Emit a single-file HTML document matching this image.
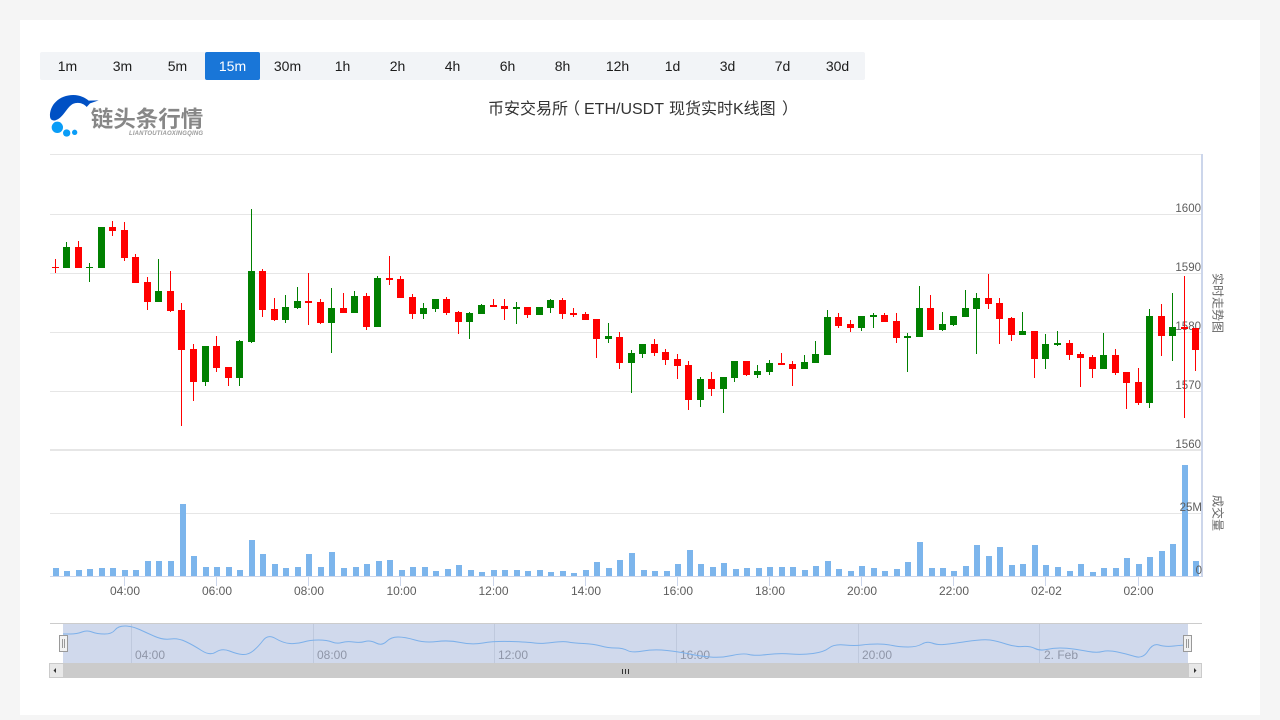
<!DOCTYPE html>
<html lang="zh">
<head>
<meta charset="utf-8">
<title>币安交易所 K线图</title>
<style>
html,body{margin:0;padding:0;width:1280px;height:720px;overflow:hidden;background:#f5f5f5}
body{position:relative;font-family:"Liberation Sans","Noto Sans CJK SC",sans-serif}
#card{position:absolute;left:20px;top:20px;width:1240px;height:695px;background:#fff}
#tabs{position:absolute;left:40px;top:52px;width:825px;height:28px;background:#f2f4f7;display:flex;border-radius:2px}
#tabs span{display:block;width:55px;height:28px;line-height:28px;text-align:center;font-size:14px;color:#1c1c1c}
#tabs span.on{background:#1976d8;color:#fff;border-radius:2px}
svg{position:absolute;left:0;top:0}
text{font-family:"Liberation Sans","Noto Sans CJK SC",sans-serif}
</style>
</head>
<body>
<div id="card"></div>
<div id="tabs"><span>1m</span><span>3m</span><span>5m</span><span class="on">15m</span><span>30m</span><span>1h</span><span>2h</span><span>4h</span><span>6h</span><span>8h</span><span>12h</span><span>1d</span><span>3d</span><span>7d</span><span>30d</span></div>

<svg width="320" height="110" viewBox="0 0 960 330" style="left:30px;top:40px">
<path fill="#0050c4" d="M60 230C58 195 88 165 130 165C150 165 165 173 176 182L206 181L180 190L170 201C160 190 145 185 128 192C110 202 100 234 76 241C66 243 61 238 60 230Z"/>
<circle cx="82" cy="262" r="17" fill="#0a9df7"/>
<circle cx="110" cy="279" r="11" fill="#0a9df7"/>
<circle cx="134" cy="277" r="8" fill="#0a9df7"/>
</svg>

<svg width="1280" height="720" viewBox="0 0 1280 720">
<text x="147" y="127" text-anchor="middle" font-size="22.5" font-weight="bold" fill="#878787">链头条行情</text>
<text x="203" y="135" text-anchor="end" font-size="6" font-weight="bold" font-style="italic" fill="#9a9a9a" textLength="74" lengthAdjust="spacing">LIANTOUTIAOXINGQING</text>
<g font-size="16" fill="#333">
<text x="488" y="114">币安交易所</text>
<text x="564" y="114">（</text>
<text x="584" y="114">ETH/USDT</text>
<text x="669" y="114">现货实时K线图</text>
<text x="782" y="114">）</text>
</g>

<g shape-rendering="crispEdges">
<g fill="#e6e6e6">
<rect x="50" y="154" width="1152" height="1"/>
<rect x="50" y="214" width="1152" height="1"/>
<rect x="50" y="273" width="1152" height="1"/>
<rect x="50" y="332" width="1152" height="1"/>
<rect x="50" y="391" width="1152" height="1"/>
<rect x="50" y="449" width="1152" height="2"/>
<rect x="50" y="513" width="1152" height="1"/>
</g>
<g fill="#ccd6eb">
<rect x="1201" y="154" width="2" height="423"/>
<rect x="50" y="576" width="1152" height="1"/>
<rect x="124" y="577" width="1" height="9"/><rect x="216" y="577" width="1" height="9"/><rect x="308" y="577" width="1" height="9"/><rect x="400" y="577" width="1" height="9"/><rect x="493" y="577" width="1" height="9"/><rect x="585" y="577" width="1" height="9"/><rect x="677" y="577" width="1" height="9"/><rect x="769" y="577" width="1" height="9"/><rect x="861" y="577" width="1" height="9"/><rect x="953" y="577" width="1" height="9"/><rect x="1045" y="577" width="1" height="9"/><rect x="1138" y="577" width="1" height="9"/>
</g>
</g>

<g font-size="11.5" fill="#5e5e5e" text-anchor="end">
<text x="1201" y="212">1600</text>
<text x="1201" y="271">1590</text>
<text x="1201" y="330">1580</text>
<text x="1201" y="389">1570</text>
<text x="1201" y="448">1560</text>
</g>

<g shape-rendering="crispEdges">
<path stroke="#f00" fill="none" d="M55.5 259V273M78.5 241V268M112.5 221V236M124.5 222V261M135.5 254V283M147.5 277V310M170.5 271V312M181.5 303V426M193.5 344V401M216.5 336V372M228.5 367V386M262.5 269V317M274.5 298V321M308.5 273V325M320.5 299V324M343.5 293V313M366.5 293V330M389.5 256V285M400.5 276V298M412.5 294V319M446.5 297V315M458.5 311V334M493.5 299V307M504.5 299V320M527.5 307V318M562.5 298V319M573.5 308V317M585.5 312V320M596.5 319V358M619.5 332V369M654.5 339V356M665.5 349V365M677.5 354V379M688.5 361V410M711.5 372V396M746.5 361V376M781.5 353V365M792.5 361V386M838.5 313V328M850.5 320V332M884.5 313V322M896.5 313V343M930.5 295V330M988.5 274V309M999.5 298V344M1011.5 317V341M1034.5 331V378M1069.5 340V360M1080.5 352V387M1092.5 355V378M1115.5 349V375M1126.5 372V409M1138.5 368V405M1161.5 304V356M1184.5 276V418M1195.5 328V371"/>
<path fill="#f00" d="M52 267h7V268h-7zM75 247h7V268h-7zM109 227h7V231h-7zM121 230h7V258h-7zM132 257h7V283h-7zM144 282h7V302h-7zM167 291h7V311h-7zM178 310h7V350h-7zM190 349h7V382h-7zM213 346h7V368h-7zM225 367h7V378h-7zM259 271h7V310h-7zM271 309h7V320h-7zM305 301h7V303h-7zM317 302h7V323h-7zM340 308h7V313h-7zM363 296h7V327h-7zM386 278h7V280h-7zM397 279h7V298h-7zM409 297h7V314h-7zM443 299h7V313h-7zM455 312h7V322h-7zM490 305h7V307h-7zM501 306h7V309h-7zM524 307h7V315h-7zM559 300h7V314h-7zM570 313h7V315h-7zM582 314h7V320h-7zM593 319h7V339h-7zM616 337h7V363h-7zM651 344h7V353h-7zM662 352h7V360h-7zM674 359h7V366h-7zM685 365h7V400h-7zM708 379h7V389h-7zM743 361h7V375h-7zM778 363h7V365h-7zM789 364h7V369h-7zM835 317h7V326h-7zM847 324h7V328h-7zM881 315h7V322h-7zM893 321h7V338h-7zM927 308h7V330h-7zM985 298h7V304h-7zM996 303h7V319h-7zM1008 318h7V335h-7zM1031 331h7V359h-7zM1066 343h7V355h-7zM1077 354h7V358h-7zM1089 357h7V369h-7zM1112 355h7V373h-7zM1123 372h7V383h-7zM1135 382h7V403h-7zM1158 316h7V336h-7zM1181 327h7V329h-7zM1192 328h7V350h-7z"/>
<path stroke="#008000" fill="none" d="M66.5 242V268M89.5 263V282M101.5 227V268M158.5 259V302M205.5 346V386M239.5 340V386M251.5 209V343M285.5 295V323M297.5 287V309M331.5 288V353M354.5 291V313M377.5 276V327M423.5 303V319M435.5 299V312M469.5 312V339M481.5 304V314M516.5 302V324M539.5 307V315M550.5 299V313M608.5 323V343M631.5 350V393M642.5 344V358M700.5 377V407M723.5 377V413M734.5 361V382M757.5 365V378M769.5 360V375M804.5 355V369M815.5 341V363M827.5 310V355M861.5 316V331M873.5 313V328M907.5 333V372M919.5 286V337M942.5 312V331M953.5 316V326M965.5 290V317M976.5 293V354M1022.5 312V335M1045.5 334V369M1057.5 331V346M1103.5 333V369M1149.5 309V408M1172.5 293V361"/>
<path fill="#008000" d="M63 247h7V268h-7zM86 267h7V268h-7zM98 227h7V268h-7zM155 291h7V302h-7zM202 346h7V382h-7zM236 341h7V378h-7zM248 271h7V342h-7zM282 307h7V320h-7zM294 301h7V308h-7zM328 308h7V323h-7zM351 296h7V313h-7zM374 278h7V327h-7zM420 308h7V314h-7zM432 299h7V309h-7zM466 313h7V322h-7zM478 305h7V314h-7zM513 307h7V309h-7zM536 307h7V315h-7zM547 300h7V308h-7zM605 336h7V339h-7zM628 353h7V363h-7zM639 344h7V354h-7zM697 379h7V400h-7zM720 377h7V389h-7zM731 361h7V378h-7zM754 371h7V375h-7zM766 363h7V372h-7zM801 362h7V369h-7zM812 354h7V363h-7zM824 317h7V355h-7zM858 316h7V328h-7zM870 315h7V317h-7zM904 336h7V338h-7zM916 308h7V337h-7zM939 324h7V330h-7zM950 316h7V325h-7zM962 308h7V317h-7zM973 298h7V309h-7zM1019 331h7V335h-7zM1042 344h7V359h-7zM1054 343h7V345h-7zM1100 355h7V369h-7zM1146 316h7V403h-7zM1169 327h7V336h-7z"/>
<path fill="#7cb5ec" d="M53 568h6V576h-6zM64 571h6V576h-6zM76 570h6V576h-6zM87 569h6V576h-6zM99 568h6V576h-6zM110 568h6V576h-6zM122 570h6V576h-6zM133 570h6V576h-6zM145 561h6V576h-6zM156 561h6V576h-6zM168 561h6V576h-6zM180 504h6V576h-6zM191 556h6V576h-6zM203 567h6V576h-6zM214 567h6V576h-6zM226 567h6V576h-6zM237 570h6V576h-6zM249 540h6V576h-6zM260 554h6V576h-6zM272 564h6V576h-6zM283 568h6V576h-6zM295 567h6V576h-6zM306 554h6V576h-6zM318 567h6V576h-6zM329 552h6V576h-6zM341 568h6V576h-6zM353 567h6V576h-6zM364 564h6V576h-6zM376 561h6V576h-6zM387 560h6V576h-6zM399 570h6V576h-6zM410 567h6V576h-6zM422 567h6V576h-6zM433 571h6V576h-6zM445 569h6V576h-6zM456 565h6V576h-6zM468 570h6V576h-6zM479 572h6V576h-6zM491 570h6V576h-6zM502 570h6V576h-6zM514 570h6V576h-6zM525 571h6V576h-6zM537 570h6V576h-6zM548 572h6V576h-6zM560 571h6V576h-6zM571 573h6V576h-6zM583 570h6V576h-6zM594 562h6V576h-6zM606 568h6V576h-6zM617 560h6V576h-6zM629 553h6V576h-6zM641 570h6V576h-6zM652 571h6V576h-6zM664 571h6V576h-6zM675 564h6V576h-6zM687 550h6V576h-6zM698 564h6V576h-6zM710 567h6V576h-6zM721 563h6V576h-6zM733 569h6V576h-6zM744 568h6V576h-6zM756 568h6V576h-6zM767 567h6V576h-6zM779 567h6V576h-6zM790 567h6V576h-6zM802 570h6V576h-6zM813 566h6V576h-6zM825 561h6V576h-6zM836 569h6V576h-6zM848 571h6V576h-6zM859 566h6V576h-6zM871 568h6V576h-6zM882 571h6V576h-6zM894 569h6V576h-6zM905 562h6V576h-6zM917 542h6V576h-6zM929 568h6V576h-6zM940 568h6V576h-6zM951 571h6V576h-6zM963 566h6V576h-6zM974 545h6V576h-6zM986 556h6V576h-6zM997 547h6V576h-6zM1009 565h6V576h-6zM1020 564h6V576h-6zM1032 545h6V576h-6zM1043 565h6V576h-6zM1055 567h6V576h-6zM1067 571h6V576h-6zM1078 564h6V576h-6zM1090 572h6V576h-6zM1101 568h6V576h-6zM1113 568h6V576h-6zM1124 558h6V576h-6zM1136 564h6V576h-6zM1147 557h6V576h-6zM1159 551h6V576h-6zM1170 544h6V576h-6zM1182 465h6V576h-6zM1193 561h6V576h-6z"/>
</g>

<g font-size="11.5" fill="#5e5e5e" text-anchor="end">
<text x="1202" y="511">25M</text>
<text x="1202" y="574">0</text>
</g>
<g font-size="12" fill="#666" text-anchor="middle">
<text transform="translate(1213.500 303) rotate(90)">实时走势图</text>
<text transform="translate(1213.500 513) rotate(90)">成交量</text>
</g>
<g font-size="12" fill="#5e5e5e" text-anchor="middle">
<text x="125" y="595">04:00</text>
<text x="217" y="595">06:00</text>
<text x="309" y="595">08:00</text>
<text x="401.500" y="595">10:00</text>
<text x="493.500" y="595">12:00</text>
<text x="586" y="595">14:00</text>
<text x="678" y="595">16:00</text>
<text x="770" y="595">18:00</text>
<text x="862" y="595">20:00</text>
<text x="954" y="595">22:00</text>
<text x="1046.500" y="595">02-02</text>
<text x="1138.500" y="595">02:00</text>
</g>

<rect x="63" y="624" width="1125" height="39" fill="#d0d9ec" shape-rendering="crispEdges"/>
<g fill="#bfc9dd" shape-rendering="crispEdges">
<rect x="131" y="624" width="1" height="39"/><rect x="313" y="624" width="1" height="39"/><rect x="494" y="624" width="1" height="39"/><rect x="676" y="624" width="1" height="39"/><rect x="858" y="624" width="1" height="39"/><rect x="1039" y="624" width="1" height="39"/>
</g>
<g font-size="12" fill="#8f96a8">
<text x="135" y="659">04:00</text>
<text x="317" y="659">08:00</text>
<text x="498" y="659">12:00</text>
<text x="680" y="659">16:00</text>
<text x="862" y="659">20:00</text>
<text x="1044" y="659">2. Feb</text>
</g>
<path fill="none" stroke="#7cb0ea" stroke-width="1" d="M63 634L70 634Q77 634 82 632Q87 630 92 632Q97 634 104.500 634Q112 634 115 630Q118 626 125 626Q132 626 139.500 629.500Q147 633 155 636.500Q163 640 170.500 639Q178 638 185.500 641.500Q193 645 201.500 650.500Q210 656 216 652Q222 648 229.500 651Q237 654 242.500 654.500Q248 655 253 651Q258 647 263 640.500Q268 634 275.500 638.500Q283 643 290 643.500Q297 644 303.500 642Q310 640 318.500 640Q327 640 332 642Q337 644 342 642.500Q347 641 353.500 642Q360 643 365 641.500Q370 640 376 643Q382 646 386.500 641.500Q391 637 398 637Q405 637 415 640Q425 643 437 641.500Q449 640 460.500 642.500Q472 645 483 643Q494 641 511 641.500Q528 642 534.500 643Q541 644 552 642.500Q563 641 568 642Q573 643 583.500 643.500Q594 644 601 646Q608 648 615.500 648Q623 648 627.500 650.500Q632 653 643 651Q654 649 667 650.500Q680 652 689.500 654Q699 656 710 657Q721 658 732 655.500Q743 653 749 654.500Q755 656 767.500 654.500Q780 653 791 654Q802 655 813 653.500Q824 652 829 648Q834 644 844.500 645Q855 646 862 645Q869 644 877.500 644Q886 644 892.500 645.500Q899 647 908 647Q917 647 922 644Q927 641 932 643Q937 645 943.500 644.500Q950 644 966.500 641.500Q983 639 990 640Q997 641 1006 644Q1015 647 1022.500 646.500Q1030 646 1035 648.500Q1040 651 1046.500 649.500Q1053 648 1060 648Q1067 648 1073.500 649Q1080 650 1088.500 651.500Q1097 653 1102.500 651.500Q1108 650 1117.500 652Q1127 654 1135 656.500Q1143 659 1148 651Q1153 643 1159 645Q1165 647 1174 646Q1183 645 1188 645"/>
<rect x="50" y="623" width="1152" height="1" fill="#cccccc" shape-rendering="crispEdges"/>
<g shape-rendering="crispEdges">
<rect x="49" y="663" width="1153" height="15" fill="#cbcbcb"/>
<rect x="49.500" y="663.500" width="14" height="14" fill="#e8e8e8" stroke="#cbcbcb"/>
<rect x="1188.500" y="663.500" width="13" height="14" fill="#e8e8e8" stroke="#cbcbcb"/>
<path fill="#333" d="M56 668v5l-2.500-2.500zM1194 668v5l2.500-2.500z" shape-rendering="auto"/>
<path stroke="#333" fill="none" d="M622.500 669V674M625.500 669V674M628.500 669V674"/>
<rect x="59.500" y="635.500" width="8" height="16" fill="#f2f2f2" stroke="#999"/>
<rect x="1183.500" y="635.500" width="8" height="16" fill="#f2f2f2" stroke="#999"/>
<path stroke="#999" fill="none" d="M62.500 639V648M64.500 639V648M1186.500 639V648M1188.500 639V648"/>
</g>
</svg>
</body>
</html>
